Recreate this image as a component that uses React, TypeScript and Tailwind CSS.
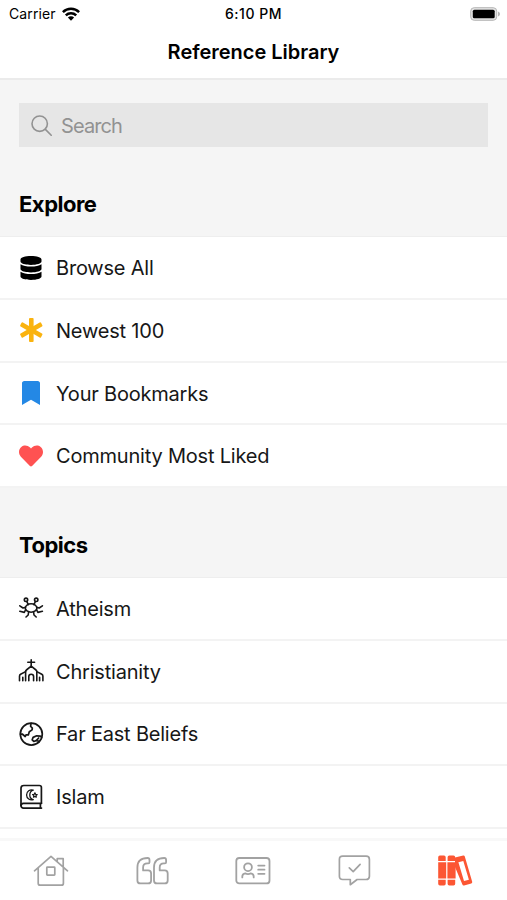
import type { ReactNode } from "react"
import { FaBookmark, FaDatabase, FaHeart } from "react-icons/fa"

type Item = {
  title: string
  icon: ReactNode
}

const outline = {
  fill: "none",
  stroke: "currentColor",
  strokeLinecap: "round" as const,
  strokeLinejoin: "round" as const,
}

const AsteriskIcon = () => (
  <svg width="26" height="26" viewBox="0 0 26 26" fill="#fab30f">
    <rect x="11" y="1" width="4.6" height="24" rx="1" />
    <rect x="11" y="1" width="4.6" height="24" rx="1" transform="rotate(60 13.3 13)" />
    <rect x="11" y="1" width="4.6" height="24" rx="1" transform="rotate(-60 13.3 13)" />
  </svg>
)

const MonsterIcon = () => (
  <svg width="26" height="26" viewBox="0 0 26 26" strokeWidth="1.6" {...outline}>
    <circle cx="8" cy="4.8" r="1.7" />
    <circle cx="18.2" cy="4.8" r="1.7" />
    <path d="M8.8 6.6l1.6 3M17.4 6.6l-1.6 3" />
    <ellipse cx="13.1" cy="13" rx="5.8" ry="4.2" />
    <path d="M7.5 12.4L5 13 1.8 10.8M7.7 14.6L6.3 17.4 1.8 16.3M18.7 12.4L21.2 13l3.2-2.2M18.5 14.6l1.4 2.8 4.5-1.1" />
    <path d="M10.6 17L10.2 20 8 22M15.6 17l.4 3 2.2 2" />
  </svg>
)

const ChurchIcon = () => (
  <svg width="26" height="26" viewBox="0 0 26 26" strokeWidth="1.6" {...outline}>
    <path d="M13.2 1.8v6.4M9.8 4.2h6.8" />
    <path d="M7.6 22.8v-9.2q0-1 .8-1.6l4.8-3.8 4.8 3.8q.8.6.8 1.6v9.2" />
    <path d="M1.5 22.8v-4.6q0-1.3 1.1-1.9l5-2.7M24.9 22.8v-4.6q0-1.3-1.1-1.9l-5-2.7" />
    <path d="M4.8 22.8v-3.6M21.6 22.8v-3.6M10.8 22.8v-4.2a2.4 2.4 0 0 1 4.8 0v4.2" />
  </svg>
)

const EarthIcon = () => (
  <svg width="26" height="26" viewBox="0 0 26 26" strokeWidth="1.7" {...outline}>
    <circle cx="13.3" cy="13.1" r="11" />
    <path d="M2.5 13.2l1.7-.2 3 2.5.8-1.6h2.3l1-3.2 2.8-1.8.2-1.8-1.7-1.9.5-2.8" />
    <path d="M23.7 16.5l-1.4-1.3-3.6-.4-3.6 1.6-.9 2.4 1.6 1.7 2.3-1 2.5.6.1 1.2M17.9 19.9l2.8-2.9" />
  </svg>
)

const QuranIcon = () => (
  <svg width="26" height="26" viewBox="0 0 26 26" strokeWidth="1.7" {...outline}>
    <path d="M23.5 19.3H5.4a2.4 2.4 0 0 0 0 4.8h18.1M22.4 19.5v4.4" />
    <path d="M3 21.5V4.3Q3 1.5 5.8 1.5h15.6q2 0 2 2v15.6" />
    <path
      strokeWidth="1.3"
      d="M15.3 6.2a5 5 0 1 0 0 9.4 4.9 4.9 0 0 1 0-9.4z"
    />
    <path strokeWidth="1.2" d="M16.9 8.8l.7 1.5 1.6.2-1.2 1.1.3 1.6-1.4-.8-1.4.8.3-1.6-1.2-1.1 1.6-.2z" />
  </svg>
)

const explore: Item[] = [
  { title: "Browse All", icon: <FaDatabase className="text-black" /> },
  { title: "Newest 100", icon: <AsteriskIcon /> },
  { title: "Your Bookmarks", icon: <FaBookmark className="text-[#2488e5]" /> },
  { title: "Community Most Liked", icon: <FaHeart className="text-[#ff5252]" /> },
]

const topics: Item[] = [
  { title: "Atheism", icon: <MonsterIcon /> },
  { title: "Christianity", icon: <ChurchIcon /> },
  { title: "Far East Beliefs", icon: <EarthIcon /> },
  { title: "Islam", icon: <QuranIcon /> },
]

const StatusBar = () => (
  <div className="grid grid-cols-3 items-center h-[27px] pl-[9px] pr-[7px] text-[14px]">
    <div className="flex items-center gap-[6px] tracking-[0.1px]">
      Carrier
      <svg width="18" height="14" viewBox="0 0 18 14" fill="none" stroke="black" strokeWidth="2.5">
        <path d="M.9 5.1a11.6 11.6 0 0 1 16.2 0M3.8 8.3a7.4 7.4 0 0 1 10.4 0" />
        <path d="M9 13.7L5.9 10.6a4.4 4.4 0 0 1 6.2 0z" fill="black" stroke="none" />
      </svg>
    </div>
    <div className="text-center font-medium whitespace-nowrap tracking-[0.5px] -ml-[2px]">6:10 PM</div>
    <svg className="justify-self-end" width="30" height="14" viewBox="0 0 30 14">
      <rect x=".7" y=".7" width="26" height="12.6" rx="3.5" fill="#e4e4e4" stroke="#b5b5b5" />
      <rect x="2.8" y="2.7" width="21.9" height="8.6" rx="1.6" fill="black" />
      <path d="M28 4.5q2 .8 2 2.5t-2 2.5z" fill="#b5b5b5" />
    </svg>
  </div>
)

const Section = ({ title, items }: { title: string; items: Item[] }) => (
  <section>
    <h2 className="h-[89px] flex items-end pb-[16.5px] px-[19px] text-[22px] leading-[32px] font-bold tracking-[-0.5px] text-black">
      {title}
    </h2>
    <ul className="bg-white border-t border-[#eeeeee]">
      {items.map((item) => (
        <li
          key={item.title}
          className="flex items-center gap-3 h-[62.7px] px-[18px] border-b-2 border-[#f3f3f3] text-[20px] tracking-[-0.2px]"
        >
          <span className="w-[26px] flex justify-center text-[24px]">{item.icon}</span>
          <span className="pt-px">{item.title}</span>
        </li>
      ))}
    </ul>
  </section>
)

const TabBar = () => (
  <nav className="shrink-0 h-[62px] pb-px grid grid-cols-5 justify-items-center items-center bg-white border-t-[3px] border-[#f8f8f8] text-[#a2a2a2]">
    <svg width="36" height="34" viewBox="0 0 36 34" strokeWidth="1.7" {...outline}>
      <path d="M1.5 17.8L18 3.3l16.5 14.5M5.2 14.8v15.4q0 2 2 2h21.2q2 0 2-2V14.8M24.2 8.6V5.7h6v8" />
      <rect x="13.8" y="14.2" width="8" height="8" rx=".6" />
    </svg>
    <svg width="36" height="34" viewBox="0 0 36 34" strokeWidth="1.8" {...outline}>
      <path d="M15.5 7V9.2q0 1.2-1.2 1.2h-1q-4.2 0-4.2 4.2v2.8h5q3 0 3 3v7q0 3-3 3H6.4q-3 0-3-3V14.6Q3.4 5 13.7 5q1.8 0 1.8 2zM32.1 7V9.2q0 1.2-1.2 1.2h-1q-4.2 0-4.2 4.2v2.8h5q3 0 3 3v7q0 3-3 3H23q-3 0-3-3V14.6Q20 5 30.3 5q1.8 0 1.8 2z" />
    </svg>
    <svg width="36" height="34" viewBox="0 0 36 34" strokeWidth="1.8" {...outline}>
      <rect x="1.3" y="5" width="33.2" height="25.4" rx="3" />
      <circle cx="13" cy="14.2" r="3.9" />
      <path d="M7.3 24.4v-.8q0-2.8 2.9-3.2 2.8 1.3 5.6 0 2.9.4 2.9 3.2v.8M23.2 12.6h6.3M23.2 16.7h6.3M23.2 20.8h6.3" />
    </svg>
    <svg width="36" height="34" viewBox="0 0 36 34" strokeWidth="1.7" {...outline}>
      <path d="M5.7 3.1h23.4q3.3 0 3.3 3.3v16.8q0 3.3-3.3 3.3h-9l-6.8 5.2v-5.2H5.7q-3.3 0-3.3-3.3V6.4q0-3.3 3.3-3.3z" />
      <path d="M12.3 14.9l3.9 3.7 6.9-7.3" />
    </svg>
    <svg className="-ml-[2px]" width="36" height="34" viewBox="0 0 36 34" fill="#fc5633">
      <path d="M1.2 8V4.2Q1.2 2.5 2.9 2.5h4.1q1.7 0 1.7 1.7V8zM1.2 9.2h8v16.2h-8zM1.2 26.7h7.5v4q0 1.7-1.7 1.7H2.9q-1.7 0-1.7-1.7z" />
      <path d="M10.6 8V4.2q0-1.7 1.7-1.7h4.2q1.7 0 1.7 1.7V8zM10.4 9.2h8.2v16.2h-8.2zM10.6 26.7h7.6v4q0 1.7-1.7 1.7h-4.2q-1.7 0-1.7-1.7z" />
      <path
        fillRule="evenodd"
        d="M18 4.6l8.2-2q1.2-.2 1.6.9l7.4 25.3q.3 1.2-.9 1.6l-7.2 2.1q-1.3.3-1.7-.9L18 14zM21.4 9.2l5.6 18.9 4.9-1.4-5.6-18.8z"
      />
    </svg>
  </nav>
)

export default function App() {
  return (
    <div className="h-[900px] w-full flex flex-col overflow-hidden bg-[#f5f5f5] text-[#171717] font-['Inter',sans-serif]">
      <header className="shrink-0 h-[80.4px] bg-white border-b-2 border-[#ebebeb] text-black">
        <StatusBar />
        <h1 className="text-center text-[20px] leading-[30px] pt-[10px] font-semibold tracking-[-0.02px]">
          Reference Library
        </h1>
      </header>
      <main className="flex-1 min-h-0 overflow-hidden flex flex-col">
        <div className="pt-[23px] px-[19px]">
          <label className="flex items-center h-[44px] pl-3 pt-px gap-[9px] bg-[#e6e6e6] text-[#929292]">
            <svg width="21" height="21" viewBox="0 0 21 21" strokeWidth="1.6" {...outline}>
              <circle cx="8.7" cy="8.7" r="7.7" />
              <path d="M14.4 14.4l5.8 5.8" />
            </svg>
            <input
              className="min-w-0 flex-1 bg-transparent outline-none text-[20px] tracking-[-0.9px] placeholder:text-[#929292]"
              placeholder="Search"
            />
          </label>
        </div>
        <Section title="Explore" items={explore} />
        <Section title="Topics" items={topics} />
        <div className="flex-1 bg-white" />
      </main>
      <TabBar />
    </div>
  )
}
